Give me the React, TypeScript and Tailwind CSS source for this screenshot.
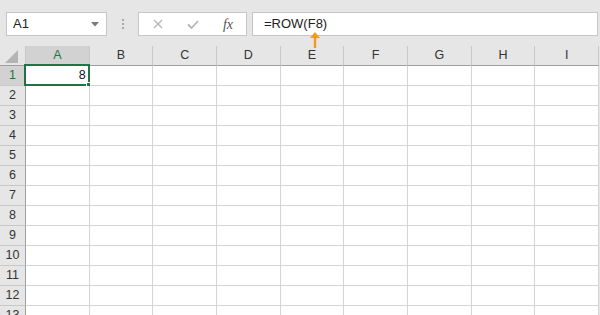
import React from 'react';

const cols = ['A', 'B', 'C', 'D', 'E', 'F', 'G', 'H', 'I'];
const rows = Array.from({ length: 13 }, (_, i) => i + 1);

const Toolbar = () => (
  <div className="flex h-[46px] items-start pt-[12px]">
    <div className="ml-[6px] flex h-[24px] w-[101px] items-center justify-between border border-[#c6c6c6] bg-white pl-[6px] pr-[7px] text-[13px] text-[#222]">
      <span>A1</span>
      <svg width="8" height="5" viewBox="0 0 8 5">
        <path d="M0 0H8L4 4.5Z" fill="#7a7a7a" />
      </svg>
    </div>
    <div className="flex h-[24px] w-[31px] flex-col items-center justify-center gap-[2px]">
      <span className="h-[2px] w-[2px] bg-[#a8a8a8]" />
      <span className="h-[2px] w-[2px] bg-[#a8a8a8]" />
      <span className="h-[2px] w-[2px] bg-[#a8a8a8]" />
    </div>
    <div className="flex h-[24px] w-[109px] items-center border border-[#c6c6c6] bg-white">
      <div className="flex w-[38px] justify-center">
        <svg width="10" height="10" viewBox="0 0 10 10">
          <path d="M1 1L9 9M9 1L1 9" stroke="#b5b5b5" strokeWidth="1.3" />
        </svg>
      </div>
      <div className="flex w-[32px] justify-center">
        <svg width="12" height="9" viewBox="0 0 12 9">
          <path d="M1 4.5L4.5 8L11 1" stroke="#b5b5b5" strokeWidth="1.8" fill="none" />
        </svg>
      </div>
      <div className="flex w-[36px] justify-center pl-[2px] font-['Liberation_Serif',serif] text-[14px] italic text-[#555]">
        fx
      </div>
    </div>
    <div className="ml-[5px] mr-[2px] flex h-[24px] flex-1 items-center border border-[#c6c6c6] bg-white pl-[11px] text-[13px] text-[#222]">
      =ROW(F8)
    </div>
  </div>
);

const Grid = () => (
  <div className="grid w-[599px] grid-cols-[26px_repeat(9,1fr)]">
    <div className="flex h-[20px] items-center justify-center border-r border-b border-r-[#c8c8c8] border-b-[#9f9f9f] bg-[#e6e6e6]">
      <svg width="13" height="13" viewBox="0 0 13 13" className="ml-[-2px] mt-[2px]">
        <path d="M13 0V13H0Z" fill="#b4b4b4" />
      </svg>
    </div>
    {cols.map(c => (
      <div
        key={c}
        className={
          c === 'A'
            ? 'flex h-[20px] items-center justify-center border-r border-b border-r-[#c8c8c8] border-b-[#217346] bg-[#d2d2d2] text-[12.5px] text-[#217346]'
            : 'flex h-[20px] items-center justify-center border-r border-b border-r-[#c8c8c8] border-b-[#9f9f9f] bg-[#e6e6e6] text-[12.5px] text-[#333]'
        }
      >
        {c}
      </div>
    ))}
    {rows.map(r => (
      <React.Fragment key={r}>
        <div
          className={
            r === 1
              ? 'flex h-[20px] items-center justify-center border-r border-b border-r-[#9f9f9f] border-b-[#c8c8c8] bg-[#d2d2d2] text-[12.5px] text-[#217346]'
              : 'flex h-[20px] items-center justify-center border-r border-b border-r-[#9f9f9f] border-b-[#c8c8c8] bg-[#e6e6e6] text-[12.5px] text-[#333]'
          }
        >
          {r}
        </div>
        {cols.map(c => (
          <div key={c} className="relative h-[20px] border-r border-b border-[#d4d4d4] bg-white">
            {r === 1 && c === 'A' && (
              <>
                <div className="absolute left-[-2px] top-[-2px] right-[-1px] bottom-[-1px] flex items-center justify-end border-2 border-[#217346] pr-[2px] text-[12.5px] text-[#111]">
                  8
                </div>
                <div className="absolute right-[-4px] bottom-[-4px] h-[7px] w-[7px] border border-white bg-[#217346]" />
              </>
            )}
          </div>
        ))}
      </React.Fragment>
    ))}
  </div>
);

export default function App() {
  return (
    <div className="relative h-[315px] w-[600px] overflow-hidden bg-[#e6e6e6] font-['Liberation_Sans',Arial,sans-serif]">
      <Toolbar />
      <Grid />
      <svg width="10" height="16" viewBox="0 0 10 16" className="absolute left-[310px] top-[32px]">
        <path d="M5 0L10 6H6.2V16H3.8V6H0Z" fill="#f39a1b" />
      </svg>
    </div>
  );
}
